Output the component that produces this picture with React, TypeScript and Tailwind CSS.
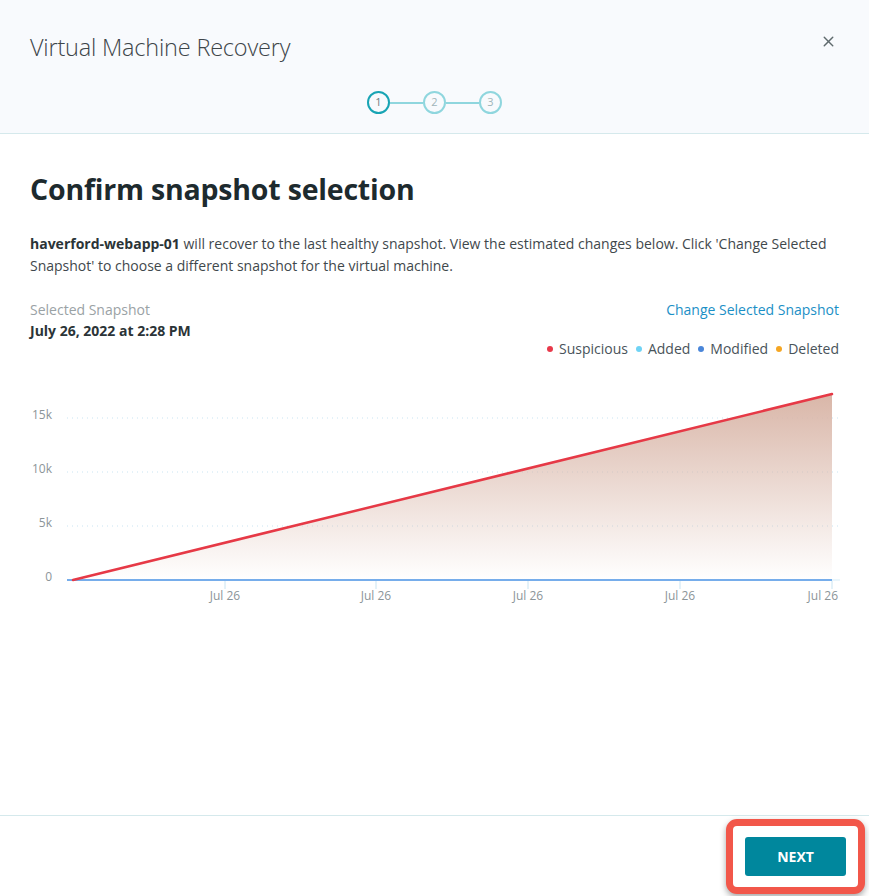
import React from 'react';
import { X } from 'lucide-react';

const legend = [
    { label: 'Suspicious', color: 'bg-[#e8394a]' },
    { label: 'Added', color: 'bg-[#6fd3f5]' },
    { label: 'Modified', color: 'bg-[#4a86d9]' },
    { label: 'Deleted', color: 'bg-[#f5a623]' },
];

const Stepper: React.FC = () => {
    return (
        <div className="flex items-center justify-center">
            <div className="w-[23px] h-[23px] rounded-full border-2 border-[#18a4b4] flex items-center justify-center text-[11px] text-[#6b7b80]">1</div>
            <div className="w-[33px] h-[2px] bg-[#8fd6de]"></div>
            <div className="w-[23px] h-[23px] rounded-full border-2 border-[#8fd6de] flex items-center justify-center text-[11px] text-[#9fb5ba]">2</div>
            <div className="w-[33px] h-[2px] bg-[#8fd6de]"></div>
            <div className="w-[23px] h-[23px] rounded-full border-2 border-[#8fd6de] flex items-center justify-center text-[11px] text-[#9fb5ba]">3</div>
        </div>
    );
};

// chart drawn in page coords, offset by the svg origin (x=30, y=380)
const ChangesChart: React.FC = () => {
    const ox = 30;
    const oy = 380;
    const grid = [
        { label: '15k', y: 417 },
        { label: '10k', y: 471 },
        { label: '5k', y: 525 },
        { label: '0', y: 579 },
    ];
    const ticks = [225, 376, 528, 680, 832];
    return (
        <svg width="810" height="230" viewBox={`${ox} ${oy} 810 230`} className="block overflow-visible">
            <defs>
                <linearGradient id="susp" x1="0" y1="0" x2="0" y2="1">
                    <stop offset="0%" stopColor="#d9b6a8" />
                    <stop offset="100%" stopColor="#d9b6a8" stopOpacity="0" />
                </linearGradient>
            </defs>
            {grid.map((g) => (
                <g key={g.label}>
                    <text x={52} y={g.y + 1} textAnchor="end" fontSize="12" fill="#8c9599" fontFamily="'Open Sans', sans-serif">{g.label}</text>
                    {g.label !== '0' && (
                        <line x1={67} x2={840} y1={g.y} y2={g.y} stroke="#c9e4f2" strokeWidth="1" strokeDasharray="1 4" />
                    )}
                </g>
            ))}
            <polygon points="73,579 832,393 832,579" fill="url(#susp)" />
            <line x1={67} x2={840} y1={579} y2={579} stroke="#d4ecf7" strokeWidth="1" />
            <line x1={67} x2={832} y1={579} y2={579} stroke="#4f95e6" strokeWidth="1.5" />
            {ticks.map((t, i) => (
                <g key={t}>
                    <line x1={t} x2={t} y1={580} y2={588} stroke="#c9e4f2" strokeWidth="1" />
                    <text
                        x={i === ticks.length - 1 ? 838 : t}
                        y={599}
                        textAnchor={i === ticks.length - 1 ? 'end' : 'middle'}
                        fontSize="12"
                        fill="#8c9599"
                        fontFamily="'Open Sans', sans-serif"
                    >
                        Jul 26
                    </text>
                </g>
            ))}
            <line x1={73} y1={579} x2={832} y2={393} stroke="#e63946" strokeWidth="2.5" strokeLinecap="round" />
        </svg>
    );
};

export default function App() {
    return (
        <div className="w-full h-[896px] flex flex-col bg-white text-[#3a4448] font-['Open_Sans',sans-serif]">
            {/* Header */}
            <div className="h-[134px] bg-[#f8fafd] border-b border-[#d5e9ec] px-[30px] pt-[31px] relative">
                <h1 className="text-[23.5px] font-light text-[#3d4549] leading-[32px] tracking-[-0.2px]">Virtual Machine Recovery</h1>
                <button type="button" className="absolute right-[32px] top-[33px] text-[#5f6a6d]">
                    <X className="w-[17px] h-[17px]" strokeWidth={2} />
                </button>
                <div className="mt-[28px]">
                    <Stepper />
                </div>
            </div>

            {/* Body */}
            <div className="flex-1 px-[30px] pt-[37px]">
                <h2 className="text-[28.5px] font-bold text-[#1d2a2e] leading-[36px] tracking-[-0.2px]">Confirm snapshot selection</h2>
                <p className="mt-[26px] text-[14px] leading-[22px] text-[#3f484c]">
                    <span className="font-bold text-[#2b3437]">haverford-webapp-01</span> will recover to the last healthy snapshot. View the estimated changes below. Click 'Change Selected Snapshot' to choose a different snapshot for the virtual machine.
                </p>
                <div className="mt-[23px] flex justify-between">
                    <div>
                        <div className="text-[14px] leading-[20px] text-[#9aa2a5]">Selected Snapshot</div>
                        <div className="text-[14px] leading-[22px] font-bold text-[#2b3437]">July 26, 2022 at 2:28 PM</div>
                    </div>
                    <div className="flex flex-col items-end">
                        <a className="text-[14px] leading-[20px] text-[#1b8fc6]">Change Selected Snapshot</a>
                        <div className="mt-[20px] flex items-center gap-[8px] text-[14px] leading-[18px] text-[#49535a]">
                            {legend.map((l) => (
                                <div key={l.label} className="flex items-center gap-[6px]">
                                    <span className={`w-[6px] h-[6px] rounded-full ${l.color}`}></span>
                                    <span>{l.label}</span>
                                </div>
                            ))}
                        </div>
                    </div>
                </div>
                <div className="mt-[23px]">
                    <ChangesChart />
                </div>
            </div>

            {/* Footer */}
            <div className="h-[81px] border-t border-[#d5e9ec] flex items-center justify-end pr-[4px]">
                <div className="px-[12px] py-[11px] border-[7px] border-[#f2574a] rounded-[11px] shadow-[0_3px_6px_rgba(0,0,0,0.35)] bg-white">
                    <button type="button" className="w-[101px] h-[39px] rounded-[3px] bg-[#00879d] text-white text-[14px] font-bold">NEXT</button>
                </div>
            </div>
        </div>
    );
}
